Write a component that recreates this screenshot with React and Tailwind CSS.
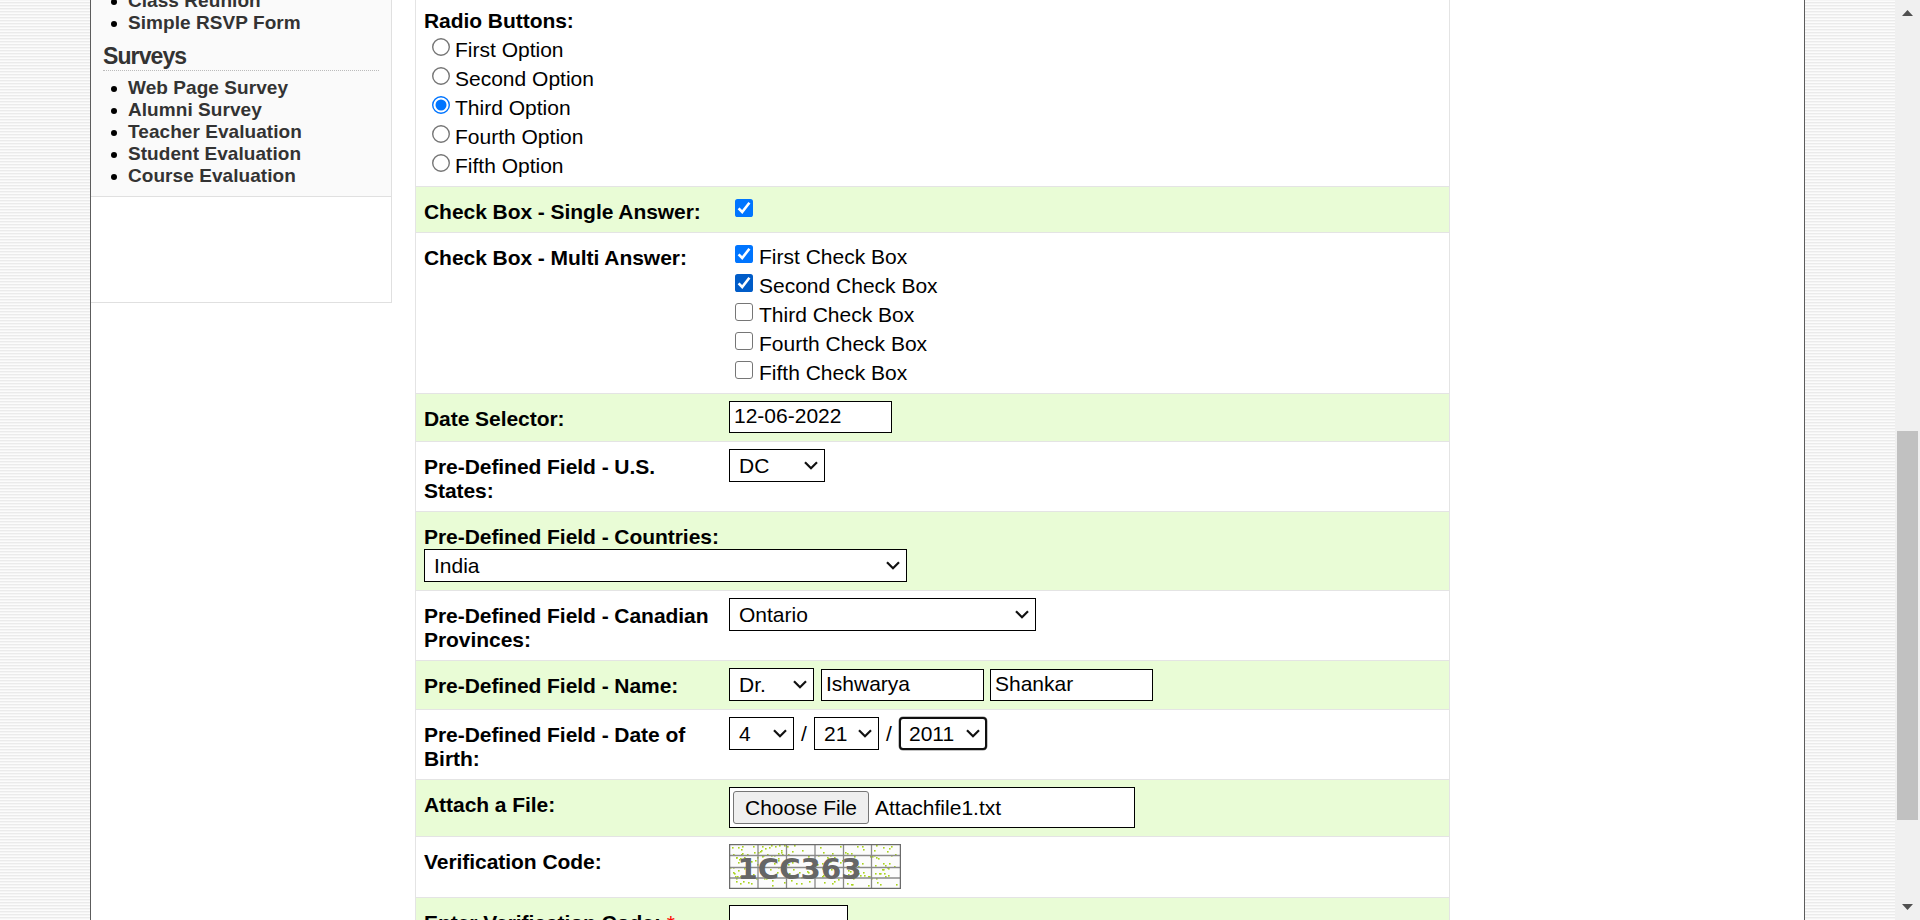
import React from "react";

function Arrow() {
  return (
    <svg className="block shrink-0" width="14" height="9" viewBox="0 0 14 9" fill="none" stroke="#111" strokeWidth="2.2">
      <path d="M1 1.2 L7 7.2 L13 1.2" />
    </svg>
  );
}

function Select({ value, className = "w-[96px]", focused = false }) {
  return (
    <div
      className={
        "flex h-[33px] items-center justify-between bg-white leading-[24px] " +
        (focused
          ? "rounded-[4px] border-2 border-[#101010] pl-[8px] pr-[5px] shadow-[0_0_0_0.5px_#888] "
          : "border border-black pl-[9px] pr-[6px] ") +
        className
      }
    >
      <span>{value}</span>
      <Arrow />
    </div>
  );
}

function TextBox({ value, className = "w-[163px]" }) {
  return (
    <div className={"h-[32px] border border-black bg-white pl-[4px] pt-[2px] leading-[24px] " + className}>{value}</div>
  );
}

function Row({ height, alt, label, children }) {
  return (
    <div className={"flex shrink-0 items-start border-b border-[#e4e4e4] pl-[8px] " + height + (alt ? " bg-[#e9fcd6]" : " bg-white")}>
      <div className="w-[305px] shrink-0 pt-[13px] font-bold leading-[24px] whitespace-pre tracking-[-0.05px]">{label}</div>
      {children}
    </div>
  );
}

function Check({ state }) {
  if (!state) return <span className="block size-[18px] rounded-[3px] border-[1.5px] border-[#767676] bg-white" />;
  return (
    <svg className="block" width="18" height="18" viewBox="0 0 18 18">
      <rect width="18" height="18" rx="2.6" fill={state === "hover" ? "#005cc8" : "#0075ff"} />
      <path d="M3.6 9.4 L7.2 13 L14.4 3.8" fill="none" stroke="#fff" strokeWidth="2.6" />
    </svg>
  );
}

function Radio({ on }) {
  return (
    <svg className="block" width="18" height="18" viewBox="0 0 18 18">
      <circle cx="9" cy="9" r="8.3" fill="#fff" stroke={on ? "#0075ff" : "#767676"} strokeWidth="1.4" />
      {on && <circle cx="9" cy="9" r="5.5" fill="#0075ff" />}
    </svg>
  );
}

function LinkList({ items, className }) {
  return (
    <ul className={"flex flex-col font-bold text-[19px] leading-[22px] tracking-[0.06px] text-[#333] " + className}>
      {items.map((t) => (
        <li key={t} className="flex h-[22px] items-center pl-[20px]">
          <span className="mt-[2px] mr-[11px] size-[6px] shrink-0 rounded-full bg-black" />
          <span className="whitespace-nowrap">{t}</span>
        </li>
      ))}
    </ul>
  );
}

let seed = 20221;
function next() {
  seed = (seed * 16807) % 2147483647;
  return seed / 2147483647;
}
const dots = Array.from({ length: 185 }, () => [Math.floor(next() * 168) + 1, Math.floor(next() * 41) + 1]);

function Captcha() {
  return (
    <svg className="mt-[7px] block" width="172" height="45" viewBox="0 0 172 45">
      <rect width="172" height="45" fill="#fcfcfc" />
      {dots.map(([x, y], i) => (
        <rect key={i} x={x} y={y} width="1.6" height="1.6" fill="#a9d31c" />
      ))}
      <g stroke="#8a8a8a" strokeWidth="1.3">
        <path d="M29 0V45M57.500 0V45M86 0V45M114.500 0V45M142.500 0V45M0 11.500H172M0 23.500H172M0 34H172" />
      </g>
      <rect x="0.600" y="0.600" width="170.800" height="43.800" fill="none" stroke="#6b6b6b" strokeWidth="1.300" />
      <text x="8.500" y="35" fill="#666" fontFamily="DejaVu Sans" fontWeight="bold" fontSize="29" textLength="124" lengthAdjust="spacingAndGlyphs">
        1CC363
      </text>
    </svg>
  );
}

const stripes = "bg-[repeating-linear-gradient(180deg,#f5f5f5_0px,#f5f5f5_1px,#fcfcfc_1px,#fcfcfc_2px,#ebebeb_2px,#ebebeb_3px)]";

export default function App() {
  return (
    <div className="flex h-[920px] w-[1920px] overflow-hidden bg-white font-['Liberation_Sans',Arial,sans-serif] text-[21px] text-black">
      <div className={"w-[90px] shrink-0 " + stripes} />

      <div className="flex h-full w-[1715px] shrink-0 items-start border-x border-[#5c5c5c] bg-white">
        <aside className="w-[301px] shrink-0 border-r border-[#e0e0e0]">
          <div className="h-[197px] overflow-hidden border-b border-[#e0e0e0] bg-[#fafafa]">
            <LinkList className="mt-[-10px]" items={["Class Reunion", "Simple RSVP Form"]} />
            <h3 className="mt-[9px] mr-[12px] ml-[12px] h-[28px] border-b border-dotted border-[#bbb] text-[23px] font-bold leading-[26px] tracking-[-0.9px] text-[#333]">
              Surveys
            </h3>
            <LinkList
              className="mt-[6px]"
              items={["Web Page Survey", "Alumni Survey", "Teacher Evaluation", "Student Evaluation", "Course Evaluation"]}
            />
          </div>
          <div className="h-[106px] border-b border-[#e0e0e0]" />
        </aside>

        <form className="ml-[23px] flex h-full w-[1035px] flex-col overflow-hidden border-x border-[#e4e4e4]">
          <div className="h-[187px] shrink-0 border-b border-[#e4e4e4] pl-[8px] pt-[8px]">
            <div className="h-[29px] pt-[1px] font-bold leading-[24px] tracking-[-0.05px]">Radio Buttons:</div>
            {["First", "Second", "Third", "Fourth", "Fifth"].map((n) => (
              <label key={n} className="flex h-[29px] items-start pl-[8px]">
                <span className="mt-[1px] mr-[5px]">
                  <Radio on={n === "Third"} />
                </span>
                <span className="leading-[25px]">{n} Option</span>
              </label>
            ))}
          </div>

          <Row height="h-[46px]" alt label="Check Box - Single Answer:">
            <div className="pl-[6px] pt-[12px]">
              <Check state="on" />
            </div>
          </Row>

          <Row height="h-[161px]" label="Check Box - Multi Answer:">
            <div className="pl-[6px] pt-[12px]">
              {[
                ["First", "on"],
                ["Second", "hover"],
                ["Third", null],
                ["Fourth", null],
                ["Fifth", null],
              ].map(([n, s]) => (
                <label key={n} className="flex h-[29px] items-start">
                  <Check state={s} />
                  <span className="ml-[6px] leading-[23px]">{n} Check Box</span>
                </label>
              ))}
            </div>
          </Row>

          <Row height="h-[48px]" alt label="Date Selector:">
            <TextBox value="12-06-2022" className="mt-[7px] w-[163px]" />
          </Row>

          <Row height="h-[70px]" label={"Pre-Defined Field - U.S.\nStates:"}>
            <Select value="DC" className="mt-[7px] w-[96px]" />
          </Row>

          <div className="h-[79px] shrink-0 border-b border-[#e4e4e4] bg-[#e9fcd6] pl-[8px] pt-[12px]">
            <div className="h-[25px] pt-[1px] font-bold leading-[24px] tracking-[-0.05px]">Pre-Defined Field - Countries:</div>
            <Select value="India" className="w-[483px]" />
          </div>

          <Row height="h-[70px]" label={"Pre-Defined Field - Canadian\nProvinces:"}>
            <Select value="Ontario" className="mt-[7px] w-[307px]" />
          </Row>

          <Row height="h-[49px]" alt label="Pre-Defined Field - Name:">
            <div className="flex items-end pt-[7px]">
              <Select value="Dr." className="w-[85px]" />
              <TextBox value="Ishwarya" className="ml-[7px] w-[163px]" />
              <TextBox value="Shankar" className="ml-[6px] w-[163px]" />
            </div>
          </Row>

          <Row height="h-[70px]" label={"Pre-Defined Field - Date of\nBirth:"}>
            <div className="flex items-center pt-[7px]">
              <Select value="4" className="w-[65px]" />
              <span className="w-[20px] text-center">/</span>
              <Select value="21" className="w-[65px]" />
              <span className="w-[20px] text-center">/</span>
              <Select value="2011" focused className="w-[88px]" />
            </div>
          </Row>

          <Row height="h-[57px]" alt label="Attach a File:">
            <div className="mt-[7px] flex h-[41px] w-[406px] items-center border border-black bg-white pl-[3px]">
              <button type="button" className="h-[33px] w-[136px] rounded-[3px] border border-[#767676] bg-[#efefef] leading-[24px]">
                Choose File
              </button>
              <span className="ml-[6px]">Attachfile1.txt</span>
            </div>
          </Row>

          <Row height="h-[61px]" label="Verification Code:">
            <Captcha />
          </Row>

          <Row
            height="h-[60px]"
            alt
            label={
              <>
                Enter Verification Code: <span className="font-normal text-[#f00]">*</span>
              </>
            }
          >
            <TextBox value="" className="mt-[7px] w-[119px]" />
          </Row>
        </form>
      </div>

      <div className={"w-[90px] shrink-0 " + stripes} />

      <div className="flex w-[25px] shrink-0 flex-col items-center bg-[#f0f0f0]">
        <svg className="mt-[10px] block shrink-0" width="11" height="6" viewBox="0 0 11 6">
          <path d="M5.500 0 L11 6 H0 Z" fill="#505050" />
        </svg>
        <div className="mt-[415px] h-[389px] w-[21px] shrink-0 bg-[#c1c1c1]" />
        <svg className="mt-[84px] block shrink-0" width="11" height="6" viewBox="0 0 11 6">
          <path d="M0 0 H11 L5.500 6 Z" fill="#505050" />
        </svg>
      </div>
    </div>
  );
}
